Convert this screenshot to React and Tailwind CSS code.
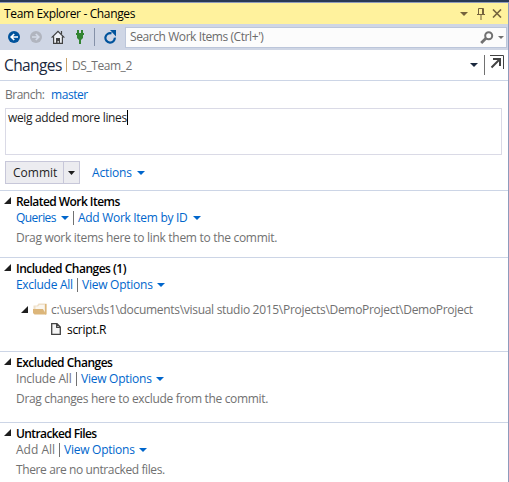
const Caret = ({ className = "text-[#0066cc]" }) => (
  <svg width="8" height="4" viewBox="0 0 8 4" className={`shrink-0 ${className}`}>
    <path d="M0 0H8L4 4Z" fill="currentColor" />
  </svg>
);

const Expander = () => (
  <svg width="7" height="7" viewBox="0 0 7 7" className="mb-[2px] shrink-0">
    <path d="M7 0V7H0Z" fill="#1e1e1e" />
  </svg>
);

const Label = ({ className = "", children }) => (
  <span className={`shrink-0 whitespace-pre ${className}`}>{children}</span>
);

const Bar = ({ className = "" }) => <span className={`h-[14px] w-px shrink-0 bg-[#717171] ${className}`} />;

function Section({ title, titleClass, links, className, children }) {
  return (
    <section className={`border-t border-[#ccd5e6] ${className}`}>
      <div className="flex h-[19px] items-center pt-[2px] pl-[4px]">
        <Expander />
        <Label className={`ml-[5px] font-semibold text-black ${titleClass}`}>{title}</Label>
      </div>
      <div className="flex h-[15px] items-center pl-[16px]">{links}</div>
      {children}
    </section>
  );
}

const Hint = ({ className, children }) => (
  <div className="flex h-[26px] items-center pl-[16px] text-[#717171]">
    <Label className={className}>{children}</Label>
  </div>
);

const Blue = "text-[#0066cc]";

export default function App() {
  return (
    <div className="flex h-[482px] w-[509px] flex-col overflow-hidden bg-white font-['Open_Sans','Noto_Sans',sans-serif] text-[12px] leading-[16px]">
      <div className="h-[2px] shrink-0 bg-[#293955]" />
      <div className="flex min-h-0 flex-1 flex-col border-t border-r border-[#8e9bbc]">
        <header className="flex h-[21px] shrink-0 items-center bg-[#fff29d] pl-[4px] text-black">
          <Label className="w-[132px] tracking-[-0.36px]">Team Explorer - Changes</Label>
          <Caret className="ml-[324px] text-[#75633d]" />
          <svg width="8" height="12" viewBox="0 0 8 12" className="ml-[9px]" fill="none" stroke="#75633d">
            <path d="M1.5 6.5V.5H6.5V6.5M0 6.5H8M4 7V12M5.5 1V6" />
          </svg>
          <svg width="10" height="9" viewBox="0 0 10 9" className="ml-[7px]" fill="none" stroke="#75633d" strokeWidth="1.6">
            <path d="M1 .5L9 8.5M9 .5L1 8.5" />
          </svg>
        </header>

        <nav className="flex h-[26px] shrink-0 items-center bg-[#cfd6e5] pl-[8px]">
          <svg width="12" height="12" viewBox="0 0 12 12">
            <circle cx="6" cy="6" r="6" fill="#00539c" />
            <path d="M10 6H3.5M6.2 3L3.2 6L6.2 9" fill="none" stroke="#fff" strokeWidth="1.7" />
          </svg>
          <svg width="12" height="12" viewBox="0 0 12 12" className="ml-[10px]">
            <circle cx="6" cy="6" r="6" fill="#b1b5bf" />
            <path d="M2 6H8.5M5.8 3L8.8 6L5.8 9" fill="none" stroke="#d5dbe8" strokeWidth="1.7" />
          </svg>
          <svg width="14" height="14" viewBox="0 0 14 14" className="ml-[9px]">
            <path d="M2.5 7V13.2H11.5V7L7 2.5Z" fill="#eef0f5" />
            <path d="M.6 7.6L7 1.3L13.4 7.6M2.6 6.5V13.3H11.4V6.5M10.5 4V1" fill="none" stroke="#424242" strokeWidth="1.2" />
            <path d="M5 8H9V13H7.8V11H6.6V13H5Z" fill="#424242" />
          </svg>
          <svg width="8" height="14" viewBox="0 0 8 14" className="ml-[11px]" fill="#328432">
            <path d="M1 0H3V3H5V0H7V3H8V5H7V8L5 10V14H3V10L1 8V5H0V3H1Z" />
          </svg>
          <span className="ml-[10px] h-[18px] w-px bg-[#8591a8]" />
          <svg width="13" height="14" viewBox="0 0 13 14" className="ml-[9px]">
            <path d="M10.8 7.6A4.7 4.7 0 1 1 7.5 3.4" fill="none" stroke="#00539c" strokeWidth="2.2" />
            <path d="M6 0H12V6.4Z" fill="#00539c" />
          </svg>
          <div className="ml-[8px] flex h-[21px] w-[382px] items-center border border-[#bcc6da] bg-[#fcfcfc] pl-[4px] text-[#6b6b6b]">
            <Label className="w-[120px] tracking-[-0.42px]">Search Work Items (Ctrl+')</Label>
            <svg width="14" height="13" viewBox="0 0 14 13" className="ml-[230px] shrink-0" fill="none" stroke="#717171">
              <circle cx="8.7" cy="4.7" r="3.5" strokeWidth="2" />
              <path d="M6 7.2L1.2 12" strokeWidth="2.8" />
            </svg>
            <svg width="6" height="3" viewBox="0 0 6 3" className="ml-[4px] shrink-0">
              <path d="M0 0H6L3 3Z" fill="#717171" />
            </svg>
          </div>
        </nav>

        <div className="flex h-[30px] shrink-0 items-center pl-[4px]">
          <Label className="w-[58px] text-[15.5px] leading-[20px] tracking-[-0.6px] text-[#1b293e]">Changes</Label>
          <span className="ml-[4px] h-[14px] w-px bg-[#c8a36c]" />
          <Label className="mt-[2px] ml-[5px] w-[60px] tracking-[-0.44px] text-[#717171]">DS_Team_2</Label>
          <Caret className="ml-[338px] text-[#1b293e]" />
          <span className="ml-[6px] h-[20px] w-px bg-[#717171]" />
          <svg width="14" height="15" viewBox="0 0 14 15" className="mb-[5px] ml-[5px]" fill="none" stroke="#424242">
            <path d="M0 .5H13.5V14" />
            <path d="M1.5 12.5L9.5 4.5M3 4H10V11" strokeWidth="2" />
          </svg>
        </div>

        <div className="flex h-[28px] shrink-0 items-center border-t border-[#ccd5e6] pl-[5px]">
          <Label className="w-[46px] tracking-[-0.5px] text-[#717171]">Branch:</Label>
          <Label className={`tracking-[-0.45px] ${Blue}`}>master</Label>
        </div>
        <div className="ml-[5px] flex h-[47px] w-[497px] shrink-0 items-start border border-[#dadae6] pt-px pl-[2px] text-[#1e1e1e]">
          <Label className="w-[119px] tracking-[-0.35px]">weig added more lines</Label>
          <span className="h-[15px] w-px bg-black" />
        </div>
        <div className="mt-[6px] flex h-[23px] shrink-0 items-center pl-[5px]">
          <div className="flex h-[23px] w-[75px] items-center border border-[#c7c7d9] bg-[#ececf0] text-[#1e1e1e]">
            <Label className="w-[57px] pl-[7px]">Commit</Label>
            <span className="h-full w-px bg-[#c7c7d9]" />
            <svg width="7" height="4" viewBox="0 0 7 4" className="ml-[4px]">
              <path d="M0 0H7L3.5 4Z" fill="#1e1e1e" />
            </svg>
          </div>
          <Label className={`ml-[12px] w-[45px] tracking-[-0.15px] ${Blue}`}>Actions</Label>
          <Caret />
        </div>

        <Section title="Related Work Items" titleClass="tracking-[-0.55px]" className="mt-[6px] h-[67px] shrink-0"
          links={<>
            <Label className={`w-[45px] tracking-[-0.55px] ${Blue}`}>Queries</Label><Caret />
            <Bar className="mx-[4px]" />
            <Label className={`w-[115px] tracking-[-0.3px] ${Blue}`}>Add Work Item by ID</Label><Caret />
          </>}>
          <Hint className="tracking-[-0.3px]">Drag work items here to link them to the commit.</Hint>
        </Section>

        <Section title="Included Changes (1)" titleClass="tracking-[-0.5px]" className="h-[94px] shrink-0"
          links={<>
            <Label className={`w-[61px] tracking-[-0.3px] ${Blue}`}>Exclude All</Label>
            <Bar className="mr-[4px]" />
            <Label className={`w-[75px] tracking-[-0.25px] ${Blue}`}>View Options</Label><Caret />
          </>}>
          <div className="mt-[8px] flex h-[20px] items-center pl-[21px]">
            <Expander />
            <svg width="14" height="12" viewBox="0 0 14 12" className="mb-[2px] ml-[5px]">
              <path d="M.5 10V2.5H4L5.5 .5H13.5V11Z" fill="#efe0c8" />
              <path d="M2.5 6V3.5H5L6.5 2H11.5V8Z" fill="#faf6ef" />
              <path d="M12 1H13.5V11.5H12Z" fill="#dcb67a" />
              <path d="M0 6H10L13 11.5H1.5L0 10Z" fill="#dcb67a" />
            </svg>
            <Label className="ml-[4px] tracking-[-0.3px] text-[#717171]">c:\users\ds1\documents\visual studio 2015\Projects\DemoProject\DemoProject</Label>
          </div>
          <div className="flex h-[19px] items-center pl-[51px]">
            <svg width="10" height="12" viewBox="0 0 10 12" className="mb-[2px]">
              <path d="M.7 .7H6L9.3 4V11.3H.7ZM5.7 .7V4.3H9.3" fill="#f5f5f5" stroke="#424242" strokeWidth="1.3" />
            </svg>
            <Label className="ml-[6px] tracking-[-0.3px] text-black">script.R</Label>
          </div>
        </Section>

        <Section title="Excluded Changes" titleClass="tracking-[-0.5px]" className="h-[71px] shrink-0"
          links={<>
            <Label className="w-[60px] tracking-[-0.2px] text-[#717171]">Include All</Label>
            <Bar className="mr-[4px]" />
            <Label className={`w-[75px] tracking-[-0.25px] ${Blue}`}>View Options</Label><Caret />
          </>}>
          <Hint className="tracking-[-0.32px]">Drag changes here to exclude from the commit.</Hint>
        </Section>

        <Section title="Untracked Files" titleClass="tracking-[-0.6px]" className="flex-1"
          links={<>
            <Label className="w-[43px] text-[#717171]">Add All</Label>
            <Bar className="mr-[4px]" />
            <Label className={`w-[75px] tracking-[-0.25px] ${Blue}`}>View Options</Label><Caret />
          </>}>
          <Hint className="tracking-[-0.39px]">There are no untracked files.</Hint>
        </Section>
      </div>
    </div>
  );
}
